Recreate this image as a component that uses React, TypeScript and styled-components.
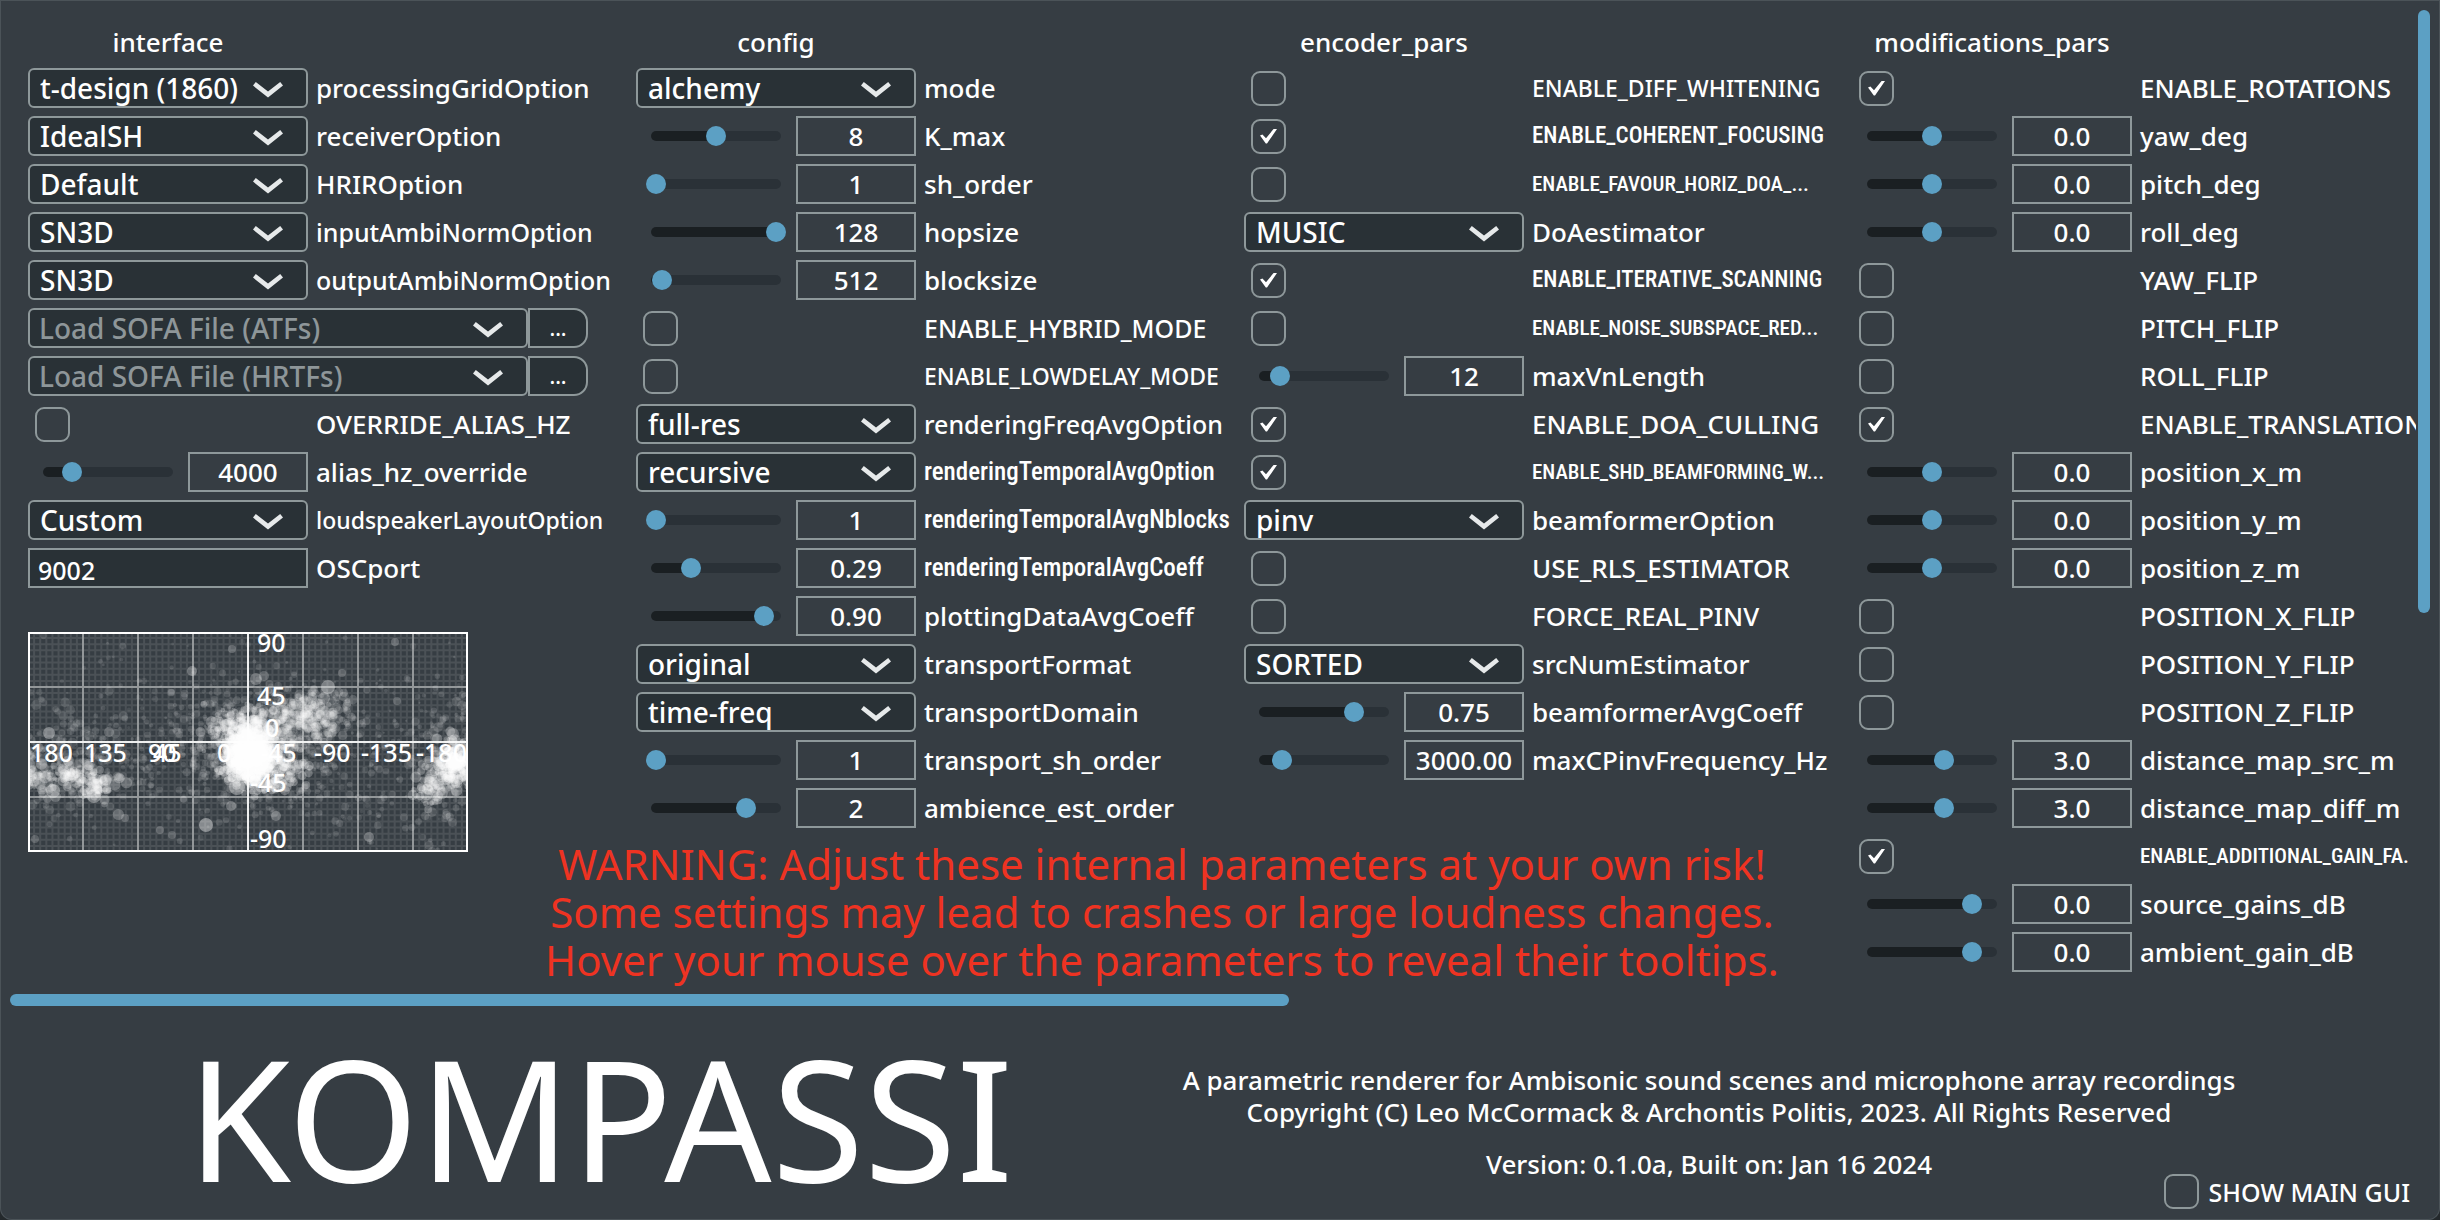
import React, { useId, useMemo, useState } from 'react';
import styled, { createGlobalStyle, css } from 'styled-components';

const color = {
  window: '#363d43',
  edge: '#4b5358',
  field: '#293136',
  line: '#8e989a',
  text: '#ffffff',
  muted: '#8e9699',
  accent: '#5ca0c4',
  trackFill: '#1a1f22',
  track: '#2a3137',
  warning: '#ee3322',
};

const GlobalStyle = createGlobalStyle`
  *, *::before, *::after { box-sizing: border-box; }
  body {
    margin: 0;
    background: #24292c;
    color: ${color.text};
    font-family: "Noto Sans", "Open Sans", sans-serif;
    font-size: 26px;
    font-weight: 500;
    line-height: 32px;
  }
  input, select, button { font: inherit; color: inherit; margin: 0; }
`;

const Window = styled.main`
  display: flex;
  flex-direction: column;
  min-height: 100vh;
  background: ${color.window};
  box-shadow: inset 0 0 0 1px ${color.edge};
  border-radius: 0 0 12px 12px;
  overflow: hidden;
`;

const Editor = styled.div`
  display: flex;
`;

const Viewport = styled.div`
  flex: 1;
  min-width: 0;
  overflow: hidden;
  display: grid;
  grid-template-columns: 608fr 608fr 608fr 564fr;
  padding: 26px 0 0 28px;
`;

const VerticalBar = styled.div`
  flex: none;
  width: 24px;
  padding: 10px 0 0 2px;

  &::before {
    content: '';
    display: block;
    width: 12px;
    height: 61.7%;
    border-radius: 6px;
    background: ${color.accent};
  }
`;

const HorizontalBar = styled.div`
  width: 53%;
  height: 12px;
  margin-top: 6px;
  padding: 0 4px 0 10px;

  &::before {
    content: '';
    display: block;
    height: 12px;
    border-radius: 6px;
    background: ${color.accent};
  }
`;

const Column = styled.section<{ $index: number }>`
  grid-column: ${(p) => p.$index};
  grid-row: 1;
  min-width: 0;
  display: flex;
  flex-direction: column;
  gap: 8px;
  padding-bottom: 16px;
`;

const ColumnTitle = styled.h2`
  width: 280px;
  margin: 0 0 2px;
  font-size: 26px;
  font-weight: 500;
  line-height: 32px;
  text-align: center;
`;

const Row = styled.div`
  display: grid;
  grid-template-columns: 280px minmax(0, 1fr);
  column-gap: 8px;
  align-items: center;
  height: 40px;
`;

type Fit = 'snug' | 'tight' | 'narrow' | 'narrower' | 'narrowest';

const condensed = css`
  font-family: "Roboto Condensed", "Noto Sans", sans-serif;
`;

const fits = {
  snug: css`
    font-size: 25px;
  `,
  tight: css`
    font-size: 23px;
  `,
  narrow: css`
    ${condensed}
    font-size: 25px;
  `,
  narrower: css`
    ${condensed}
    font-size: 23px;
  `,
  narrowest: css`
    ${condensed}
    font-size: 21px;
  `,
};

const Label = styled.label<{ $fit?: Fit }>`
  white-space: nowrap;
  line-height: 40px;
  ${(p) => p.$fit && fits[p.$fit]}
`;

const ComboFrame = styled.span`
  display: grid;
  align-items: center;
  min-width: 0;

  > * {
    grid-area: 1 / 1;
  }
`;

const ComboSelect = styled.select<{ $placeholder?: boolean }>`
  appearance: none;
  width: 100%;
  height: 40px;
  padding: ${(p) => (p.$placeholder ? '0 60px 2px 9px' : '0 48px 0 10px')};
  border: 2px solid ${color.line};
  border-radius: 6px;
  background: ${color.field};
  color: ${(p) => (p.$placeholder ? color.muted : color.text)};
  font-size: 28px;
  line-height: 36px;
`;

const ComboArrow = styled.svg`
  justify-self: end;
  width: 30px;
  height: 16px;
  margin: 4px 25px 0 0;
  pointer-events: none;
`;

const FileRow = styled.div`
  display: grid;
  grid-template-columns: 500px 60px;
  height: 40px;
`;

const BrowseButton = styled.button`
  height: 40px;
  padding: 0;
  border: 2px solid ${color.line};
  border-radius: 0 14px 14px 0;
  background: ${color.field};
  font-size: 21px;
`;

const Tick = styled.input`
  appearance: none;
  display: grid;
  place-items: center;
  width: 35px;
  height: 35px;
  margin: 0 0 0 7px;
  border: 2px solid ${color.line};
  border-radius: 9px;

  &:checked {
    background: no-repeat center / 17px 15px
      url("data:image/svg+xml,%3Csvg xmlns='http://www.w3.org/2000/svg' viewBox='0 0 17 15'%3E%3Cpath d='M0 6.6 2.4 5.4 6 9.2 13.6 0H17L7 14.6H5.8Z' fill='white'/%3E%3C/svg%3E");
  }
`;

const SliderFrame = styled.span`
  display: flex;
  align-items: center;
  justify-content: space-between;
  padding-left: 15px;
`;

const Track = styled.span`
  display: flex;
  align-items: center;
  width: 130px;
  height: 10px;
  border-radius: 5px;
`;

const Range = styled.input`
  appearance: none;
  flex: none;
  width: 140px;
  height: 20px;
  margin: 0 -5px;
  background: transparent;

  &::-webkit-slider-thumb {
    appearance: none;
    width: 20px;
    height: 20px;
    border-radius: 50%;
    background: ${color.accent};
  }
`;

const NumberBox = styled.input`
  width: 120px;
  height: 40px;
  padding: 0;
  border: 2px solid ${color.line};
  background: transparent;
  text-align: center;
`;

const TextBox = styled.input`
  width: 100%;
  height: 40px;
  padding: 4px 8px 0;
  border: 2px solid ${color.line};
  background: ${color.field};
  font-size: 25px;
`;

const Warning = styled.p`
  grid-column: 1 / -1;
  grid-row: 1;
  align-self: end;
  justify-self: center;
  margin: 0;
  padding: 0 120px 4px 0;
  color: ${color.warning};
  font-size: 42px;
  font-weight: 400;
  line-height: 48px;
  text-align: center;
  white-space: nowrap;
  pointer-events: none;
`;

const Footer = styled.footer`
  flex: 1;
  display: grid;
  grid-template-columns: minmax(0, 1176fr) minmax(0, 1264fr);
`;

const Brand = styled.h1`
  margin: 0;
  align-self: center;
  padding: 8px 0 0 24px;
  text-align: center;
  font-size: 168px;
  font-weight: 400;
  line-height: 192px;
`;

const Credits = styled.div`
  grid-area: 1 / 2;
  padding: 58px 198px 0 0;
  text-align: center;
  white-space: nowrap;
`;

const CreditLine = styled.p`
  margin: 0;

  & + &:last-child {
    margin-top: 20px;
  }
`;

const MainGuiToggle = styled.label`
  grid-area: 1 / 2;
  place-self: end;
  display: flex;
  align-items: center;
  gap: 10px;
  padding: 0 30px 11px 0;
  font-size: 25px;
`;

const Plot = styled.svg`
  flex: none;
  display: block;
  width: 440px;
  height: 220px;
  margin-top: 36px;
`;

const AxisText = styled.text`
  fill: ${color.text};
  font-size: 25px;
  font-weight: 500;
`;

type Param = { name: string; fit?: Fit } & (
  | { kind: 'combo'; value: string }
  | { kind: 'slider'; at: number; value: string }
  | { kind: 'tick'; on?: boolean }
  | { kind: 'text'; value: string }
  | { kind: 'file' }
);

const combo = (name: string, value: string, fit?: Fit): Param => ({ kind: 'combo', name, value, fit });
const slider = (name: string, value: string, at: number, fit?: Fit): Param => ({ kind: 'slider', name, value, at, fit });
const tick = (name: string, on = false, fit?: Fit): Param => ({ kind: 'tick', name, on, fit });

const interfacePars: Param[] = [
  combo('processingGridOption', 't-design (1860)'),
  combo('receiverOption', 'IdealSH'),
  combo('HRIROption', 'Default'),
  combo('inputAmbiNormOption', 'SN3D', 'snug'),
  combo('outputAmbiNormOption', 'SN3D', 'snug'),
  { kind: 'file', name: 'Load SOFA File (ATFs)' },
  { kind: 'file', name: 'Load SOFA File (HRTFs)' },
  tick('OVERRIDE_ALIAS_HZ'),
  slider('alias_hz_override', '4000', 20),
  combo('loudspeakerLayoutOption', 'Custom', 'tight'),
  { kind: 'text', name: 'OSCport', value: '9002' },
];

const configPars: Param[] = [
  combo('mode', 'alchemy'),
  slider('K_max', '8', 50),
  slider('sh_order', '1', 0),
  slider('hopsize', '128', 100),
  slider('blocksize', '512', 5),
  tick('ENABLE_HYBRID_MODE', false, 'snug'),
  tick('ENABLE_LOWDELAY_MODE', false, 'tight'),
  combo('renderingFreqAvgOption', 'full-res', 'snug'),
  combo('renderingTemporalAvgOption', 'recursive', 'narrow'),
  slider('renderingTemporalAvgNblocks', '1', 0, 'narrow'),
  slider('renderingTemporalAvgCoeff', '0.29', 29, 'narrow'),
  slider('plottingDataAvgCoeff', '0.90', 90),
  combo('transportFormat', 'original'),
  combo('transportDomain', 'time-freq'),
  slider('transport_sh_order', '1', 0),
  slider('ambience_est_order', '2', 75),
];

const encoderPars: Param[] = [
  tick('ENABLE_DIFF_WHITENING', false, 'tight'),
  tick('ENABLE_COHERENT_FOCUSING', true, 'narrower'),
  tick('ENABLE_FAVOUR_HORIZ_DOA_...', false, 'narrowest'),
  combo('DoAestimator', 'MUSIC'),
  tick('ENABLE_ITERATIVE_SCANNING', true, 'narrower'),
  tick('ENABLE_NOISE_SUBSPACE_RED...', false, 'narrowest'),
  slider('maxVnLength', '12', 13),
  tick('ENABLE_DOA_CULLING', true),
  tick('ENABLE_SHD_BEAMFORMING_W...', true, 'narrowest'),
  combo('beamformerOption', 'pinv'),
  tick('USE_RLS_ESTIMATOR'),
  tick('FORCE_REAL_PINV'),
  combo('srcNumEstimator', 'SORTED'),
  slider('beamformerAvgCoeff', '0.75', 75),
  slider('maxCPinvFrequency_Hz', '3000.00', 15),
];

const modificationPars: Param[] = [
  tick('ENABLE_ROTATIONS', true),
  slider('yaw_deg', '0.0', 50),
  slider('pitch_deg', '0.0', 50),
  slider('roll_deg', '0.0', 50),
  tick('YAW_FLIP'),
  tick('PITCH_FLIP'),
  tick('ROLL_FLIP'),
  tick('ENABLE_TRANSLATION', true),
  slider('position_x_m', '0.0', 50),
  slider('position_y_m', '0.0', 50),
  slider('position_z_m', '0.0', 50),
  tick('POSITION_X_FLIP'),
  tick('POSITION_Y_FLIP'),
  tick('POSITION_Z_FLIP'),
  slider('distance_map_src_m', '3.0', 60),
  slider('distance_map_diff_m', '3.0', 60),
  tick('ENABLE_ADDITIONAL_GAIN_FA.', true, 'narrowest'),
  slider('source_gains_dB', '0.0', 83),
  slider('ambient_gain_dB', '0.0', 83),
];

function Combo({ id, value, placeholder, label }: { id?: string; value: string; placeholder?: boolean; label?: string }) {
  return (
    <ComboFrame>
      <ComboSelect id={id} aria-label={label} $placeholder={placeholder}>
        <option>{value}</option>
      </ComboSelect>
      <ComboArrow viewBox="0 0 30 16" aria-hidden="true">
        <path d="M0 3.6 2.8 0 15 9.6 27.2 0 30 3.6 15 15.6Z" fill="#e6e9ea" />
      </ComboArrow>
    </ComboFrame>
  );
}

function Slider({ id, name, start, value }: { id: string; name: string; start: number; value: string }) {
  const [at, setAt] = useState(start);
  const background = `linear-gradient(to right, ${color.trackFill} ${at}%, ${color.track} ${at}%)`;
  return (
    <SliderFrame>
      <Track style={{ background }}>
        <Range id={id} type="range" value={at} onChange={(e) => setAt(Number(e.target.value))} />
      </Track>
      <NumberBox type="text" aria-label={`${name} value`} defaultValue={value} />
    </SliderFrame>
  );
}

function ParamRow({ param }: { param: Param }) {
  const id = useId();
  if (param.kind === 'file') {
    return (
      <FileRow>
        <Combo value={param.name} label={param.name} placeholder />
        <BrowseButton type="button">...</BrowseButton>
      </FileRow>
    );
  }
  return (
    <Row>
      {param.kind === 'combo' && <Combo id={id} value={param.value} />}
      {param.kind === 'slider' && <Slider id={id} name={param.name} start={param.at} value={param.value} />}
      {param.kind === 'tick' && <Tick id={id} type="checkbox" defaultChecked={param.on} />}
      {param.kind === 'text' && <TextBox id={id} type="text" defaultValue={param.value} />}
      <Label htmlFor={id} $fit={param.fit}>
        {param.name}
      </Label>
    </Row>
  );
}

type Dot = { x: number; y: number; r: number; a: number };

// Clusters of arrival estimates: centre x, y, spread x, y, count, largest radius, opacity.
const clusters = [
  [222, 122, 12, 12, 520, 6, 0.35],
  [222, 106, 19, 15, 340, 5, 0.25],
  [240, 138, 17, 11, 200, 5, 0.25],
  [214, 112, 46, 30, 460, 4, 0.13],
  [258, 92, 26, 16, 210, 5, 0.14],
  [288, 82, 17, 12, 170, 5, 0.17],
  [34, 132, 36, 26, 200, 5, 0.12],
  [36, 144, 15, 8, 50, 6, 0.24],
  [66, 153, 12, 9, 56, 6, 0.24],
  [5, 138, 9, 12, 36, 6, 0.24],
  [427, 132, 9, 11, 190, 6, 0.28],
  [401, 152, 7, 10, 46, 6, 0.24],
  [425, 128, 20, 36, 110, 5, 0.13],
  [300, 145, 70, 36, 120, 4, 0.13],
];

const strays: Dot[] = [
  { x: 300, y: 55, r: 7, a: 0.35 },
  { x: 296, y: 66, r: 6, a: 0.25 },
  { x: 178, y: 193, r: 7, a: 0.4 },
  { x: 209, y: 155, r: 8, a: 0.35 },
  { x: 204, y: 17, r: 4, a: 0.22 },
  { x: 367, y: 10, r: 4, a: 0.22 },
  { x: 164, y: 39, r: 5, a: 0.25 },
  { x: 228, y: 47, r: 6, a: 0.25 },
  { x: 236, y: 44, r: 5, a: 0.2 },
  { x: 21, y: 101, r: 6, a: 0.35 },
  { x: 25, y: 159, r: 7, a: 0.3 },
  { x: 66, y: 164, r: 7, a: 0.35 },
  { x: 81, y: 100, r: 5, a: 0.2 },
  { x: 184, y: 90, r: 6, a: 0.25 },
  { x: 203, y: 174, r: 5, a: 0.25 },
  { x: 248, y: 184, r: 5, a: 0.25 },
  { x: 341, y: 205, r: 5, a: 0.25 },
  { x: 369, y: 69, r: 4, a: 0.18 },
  { x: 425, y: 102, r: 6, a: 0.25 },
  { x: 132, y: 198, r: 4, a: 0.2 },
  { x: 144, y: 203, r: 4, a: 0.18 },
  { x: 7, y: 207, r: 4, a: 0.18 },
  { x: 97, y: 186, r: 4, a: 0.2 },
  { x: 314, y: 41, r: 4, a: 0.2 },
];

function scatter(): Dot[] {
  let seed = 20240116;
  const next = () => {
    seed = (seed * 1664525 + 1013904223) >>> 0;
    return (seed + 1) / 4294967297;
  };
  const normal = () => Math.sqrt(-2 * Math.log(next())) * Math.cos(2 * Math.PI * next());
  const dots: Dot[] = [];
  for (const [cx, cy, sx, sy, count, radius, alpha] of clusters) {
    for (let i = 0; i < count; i++) {
      dots.push({ x: cx + normal() * sx, y: cy + normal() * sy, r: 2 + next() * (radius - 2), a: alpha });
    }
  }
  for (let i = 0; i < 420; i++) {
    dots.push({ x: next() * 440, y: 110 + normal() * 55, r: 1 + next() * 2.4, a: 0.08 + next() * 0.06 });
  }
  return dots.concat(strays);
}

const axisLabels: [number, number, string][] = [
  [229, 20, '90'],
  [229, 73, '45'],
  [237, 105, '0'],
  [222, 160, '-45'],
  [222, 216, '-90'],
  [2, 130, '180'],
  [56, 130, '135'],
  [120, 130, '90'],
  [125, 130, '45'],
  [189, 130, '0'],
  [232, 130, '-45'],
  [286, 130, '-90'],
  [333, 130, '-135'],
  [388, 130, '-180'],
];

function Grid({ step, width, opacity }: { step: number; width: number; opacity: number }) {
  const lines: string[] = [];
  for (let x = step; x < 439; x += step) lines.push(`M${x} 0V220`);
  for (let y = step; y < 219; y += step) lines.push(`M0 ${y}H440`);
  return <path d={lines.join('')} stroke="#fff" strokeWidth={width} opacity={opacity} />;
}

function ActivityMap() {
  const dots = useMemo(scatter, []);
  return (
    <Plot viewBox="0 0 440 220" role="img" aria-label="Direction of arrival activity map">
      <Grid step={55 / 9} width={2} opacity={0.1} />
      <Grid step={55} width={2} opacity={0.4} />
      <path d="M220 0V220M0 110H440" stroke="#fff" strokeWidth="2" opacity="0.85" />
      {dots.map((d, i) => (
        <circle key={i} cx={d.x} cy={d.y} r={d.r} fill="#fff" opacity={d.a} />
      ))}
      {axisLabels.map(([x, y, text], i) => (
        <AxisText key={i} x={x} y={y}>
          {text}
        </AxisText>
      ))}
      <rect x="1" y="1" width="438" height="218" fill="none" stroke="#fff" strokeWidth="2" />
    </Plot>
  );
}

const columns: [string, Param[]][] = [
  ['interface', interfacePars],
  ['config', configPars],
  ['encoder_pars', encoderPars],
  ['modifications_pars', modificationPars],
];

export default function App() {
  return (
    <Window>
      <GlobalStyle />
      <Editor>
        <Viewport>
          {columns.map(([title, params], index) => (
            <Column key={title} $index={index + 1}>
              <ColumnTitle>{title}</ColumnTitle>
              {params.map((param) => (
                <ParamRow key={param.name} param={param} />
              ))}
              {index === 0 && <ActivityMap />}
            </Column>
          ))}
          <Warning>
            WARNING: Adjust these internal parameters at your own risk!
            <br />
            Some settings may lead to crashes or large loudness changes.
            <br />
            Hover your mouse over the parameters to reveal their tooltips.
          </Warning>
        </Viewport>
        <VerticalBar />
      </Editor>
      <HorizontalBar />
      <Footer>
        <Brand>KOMPASSI</Brand>
        <Credits>
          <CreditLine>A parametric renderer for Ambisonic sound scenes and microphone array recordings</CreditLine>
          <CreditLine>Copyright (C) Leo McCormack &amp; Archontis Politis, 2023. All Rights Reserved</CreditLine>
          <CreditLine>Version: 0.1.0a, Built on: Jan 16 2024</CreditLine>
        </Credits>
        <MainGuiToggle>
          <Tick type="checkbox" />
          SHOW MAIN GUI
        </MainGuiToggle>
      </Footer>
    </Window>
  );
}
